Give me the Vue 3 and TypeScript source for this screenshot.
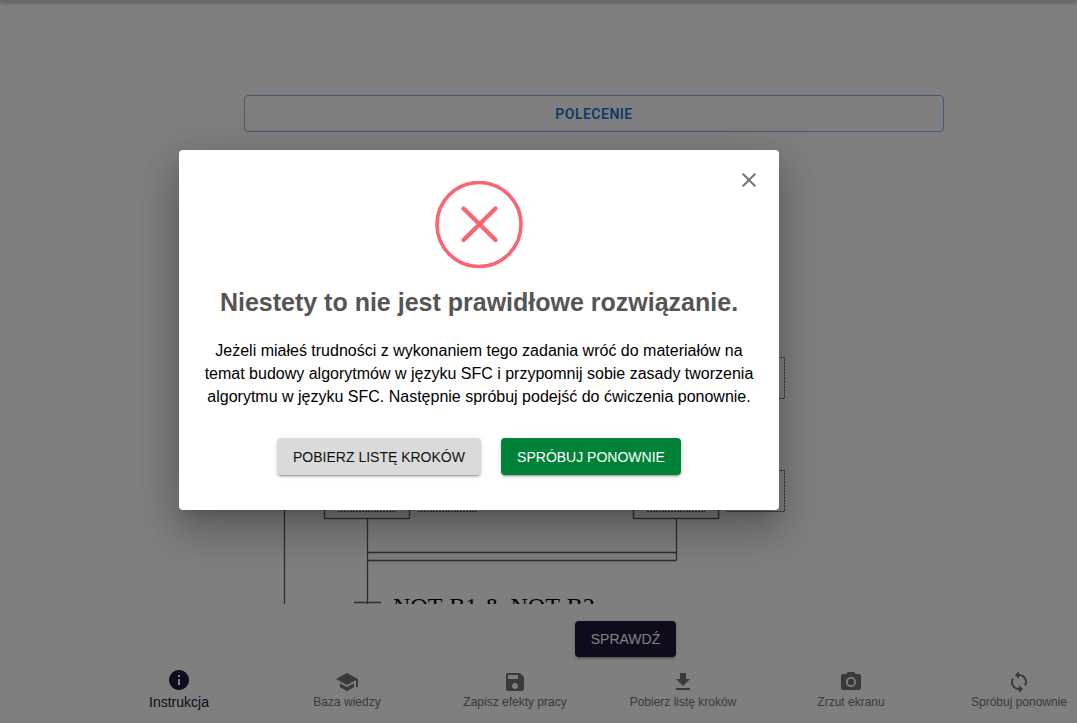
<template>
  <div class="page">
    <div class="topbar"></div>

    <div class="content">
      <button class="task-btn">POLECENIE</button>

      <svg class="diagram" width="1077" height="472" viewBox="0 132 1077 472">
        <g fill="none" stroke="#5a5a5a" stroke-width="1.3">
          <path d="M284.5 300V604" />
          <rect x="324.5" y="470.5" width="85" height="48" />
          <rect x="633.5" y="470.5" width="85" height="48" />
          <path d="M367.5 519V604M676.5 519V560.5M367 552.5H676M367 560.5H676M354 602.5H381" />
          <g stroke-dasharray="2 1" stroke-width="1">
            <path d="M338 511.5H396M418 511.5H477M647 511.5H705" />
            <rect x="726.5" y="357.5" width="58" height="41" />
            <rect x="726.5" y="470.5" width="58" height="41" />
          </g>
        </g>
        <text x="393" y="614" class="diagram-text">NOT B1 &amp; NOT B2</text>
      </svg>

      <div class="check-row">
        <button class="check-btn">SPRAWDŹ</button>
      </div>
    </div>

    <nav class="bottom-nav">
      <div v-for="item in navItems" :key="item.label" class="nav-item" :class="{ active: item.active }">
        <svg class="nav-icon" viewBox="0 0 24 24" width="24" height="24">
          <path :d="item.icon" fill="currentColor" />
          <circle v-if="item.label === 'Zrzut ekranu'" cx="12" cy="12" r="3.2" fill="currentColor" />
        </svg>
        <span>{{ item.label }}</span>
      </div>
    </nav>

    <div class="overlay">
      <div class="modal">
        <svg class="close" viewBox="0 0 24 24" width="24" height="24">
          <path fill="#757575" d="M19 6.41L17.59 5 12 10.59 6.41 5 5 6.41 10.59 12 5 17.59 6.41 19 12 13.41 17.59 19 19 17.59 13.41 12z" />
        </svg>

        <svg class="err-icon" width="88" height="87" viewBox="0 0 88 87">
          <circle cx="44" cy="43.5" r="42" fill="none" stroke="#fb6472" stroke-width="3.6" />
          <path d="M28.5 27.5L60.5 59M60.5 27.5L28.5 59" fill="none" stroke="#fb6472" stroke-width="4.4" stroke-linecap="round" />
        </svg>

        <h2 class="title">Niestety to nie jest prawidłowe rozwiązanie.</h2>

        <p class="text">
          Jeżeli miałeś trudności z wykonaniem tego zadania wróć do materiałów na<br />
          temat budowy algorytmów w języku SFC i przypomnij sobie zasady tworzenia<br />
          algorytmu w języku SFC. Następnie spróbuj podejść do ćwiczenia ponownie.
        </p>

        <div class="actions">
          <button class="btn grey">POBIERZ LISTĘ KROKÓW</button>
          <button class="btn green">SPRÓBUJ PONOWNIE</button>
        </div>
      </div>
    </div>
  </div>
</template>

<script setup lang="ts">
interface NavItem {
  label: string
  icon: string
  active?: boolean
}

const navItems: NavItem[] = [
  {
    label: 'Instrukcja',
    active: true,
    icon: 'M12 2C6.48 2 2 6.48 2 12s4.48 10 10 10 10-4.48 10-10S17.52 2 12 2zm1 15h-2v-6h2v6zm0-8h-2V7h2v2z'
  },
  {
    label: 'Baza wiedzy',
    icon: 'M5 13.18v4L12 21l7-3.82v-4L12 17l-7-3.82zM12 3L1 9l11 6 9-4.91V17h2V9L12 3z'
  },
  {
    label: 'Zapisz efekty pracy',
    icon: 'M17 3H5c-1.11 0-2 .9-2 2v14c0 1.1.89 2 2 2h14c1.1 0 2-.9 2-2V7l-4-4zm-5 16c-1.66 0-3-1.34-3-3s1.34-3 3-3 3 1.34 3 3-1.34 3-3 3zm3-10H5V5h10v4z'
  },
  {
    label: 'Pobierz listę kroków',
    icon: 'M19 9h-4V3H9v6H5l7 7 7-7zM5 18v2h14v-2H5z'
  },
  {
    label: 'Zrzut ekranu',
    icon: 'M9 2L7.17 4H4c-1.1 0-2 .9-2 2v12c0 1.1.9 2 2 2h16c1.1 0 2-.9 2-2V6c0-1.1-.9-2-2-2h-3.17L15 2H9zm3 15c-2.76 0-5-2.24-5-5s2.24-5 5-5 5 2.24 5 5-2.24 5-5 5z'
  },
  {
    label: 'Spróbuj ponownie',
    icon: 'M12 4V1L8 5l4 4V6c3.31 0 6 2.69 6 6 0 1.01-.25 1.97-.7 2.8l1.46 1.46C19.54 15.03 20 13.57 20 12c0-4.42-3.58-8-8-8zm0 14c-3.31 0-6-2.69-6-6 0-1.01.25-1.97.7-2.8L5.24 7.74C4.46 8.97 4 10.43 4 12c0 4.42 3.58 8 8 8v3l4-4-4-4v3z'
  }
]
</script>

<style>
html,
body {
  margin: 0;
  overflow: hidden;
}
</style>

<style scoped>
.page {
  position: relative;
  height: 723px;
  width: 1077px;
  overflow: hidden;
  background: #fff;
  font-family: "Liberation Sans", Arial, sans-serif;
  display: flex;
  flex-direction: column;
}

.topbar {
  height: 0;
  box-shadow: 0 1px 4px 1px rgba(0, 0, 0, 0.55);
}

.content {
  flex: 1;
  display: flex;
  flex-direction: column;
  padding-top: 95px;
  min-height: 0;
}

.task-btn {
  width: 700px;
  height: 37px;
  margin-left: 244px;
  flex: none;
  box-sizing: border-box;
  background: transparent;
  border: 1px solid rgba(25, 118, 210, 0.55);
  border-radius: 4px;
  color: #1976d2;
  font-family: Roboto, sans-serif;
  font-weight: 600;
  font-size: 14px;
  letter-spacing: 0.5px;
}

.diagram {
  display: block;
  flex: none;
}

.diagram-text {
  font-family: "Liberation Serif", serif;
  font-size: 24px;
  word-spacing: 1.3px;
  fill: #000;
}

.check-row {
  padding: 17px 0 0 575px;
}

.check-btn {
  width: 101px;
  height: 36px;
  background: #1e1438;
  color: #fff;
  border: none;
  border-radius: 4px;
  font-family: "Liberation Sans", sans-serif;
  font-size: 14px;
  box-shadow: 0 3px 1px -2px rgba(0, 0, 0, 0.2), 0 2px 2px rgba(0, 0, 0, 0.14), 0 1px 5px rgba(0, 0, 0, 0.12);
}

.bottom-nav {
  height: 56px;
  flex: none;
  display: flex;
  padding-left: 95px;
}

.nav-item {
  width: 168px;
  flex: none;
  box-sizing: border-box;
  padding-top: 3px;
  display: flex;
  flex-direction: column;
  align-items: center;
  color: #757575;
  font-size: 12px;
  line-height: 14px;
}

.nav-item span {
  margin-top: 1px;
  white-space: nowrap;
}

.nav-item.active {
  padding-top: 1px;
  color: #1e1438;
  font-size: 14px;
  line-height: 16px;
}

.nav-item.active span {
  margin-top: 2px;
}

.overlay {
  position: absolute;
  inset: 0;
  background: rgba(0, 0, 0, 0.5);
  padding: 150px 0 0 179px;
}

.modal {
  position: relative;
  width: 600px;
  height: 360px;
  box-sizing: border-box;
  padding-top: 31px;
  background: #fff;
  border-radius: 4px;
  display: flex;
  flex-direction: column;
  align-items: center;
  box-shadow: 0 11px 15px -7px rgba(0, 0, 0, 0.2), 0 24px 38px 3px rgba(0, 0, 0, 0.14), 0 9px 46px 8px rgba(0, 0, 0, 0.12);
}

.close {
  position: absolute;
  top: 18px;
  right: 18px;
}

.err-icon {
  display: block;
  flex: none;
}

.title {
  margin: 20px 0 0;
  font-size: 25px;
  line-height: 28px;
  font-weight: 700;
  color: #555;
}

.text {
  margin: 23px 0 0;
  font-size: 16px;
  line-height: 23px;
  color: #000;
  text-align: center;
  white-space: nowrap;
}

.actions {
  display: flex;
  gap: 20px;
  margin-top: 30px;
}

.btn {
  height: 37px;
  border: none;
  border-radius: 4px;
  font-family: "Liberation Sans", sans-serif;
  font-size: 14px;
  padding: 0 16px;
  box-shadow: 0 3px 1px -2px rgba(0, 0, 0, 0.2), 0 2px 2px rgba(0, 0, 0, 0.14), 0 1px 5px rgba(0, 0, 0, 0.12);
}

.btn.grey {
  width: 204px;
  background: #dadada;
  color: #111;
}

.btn.green {
  width: 180px;
  background: #008238;
  color: #fff;
}
</style>
